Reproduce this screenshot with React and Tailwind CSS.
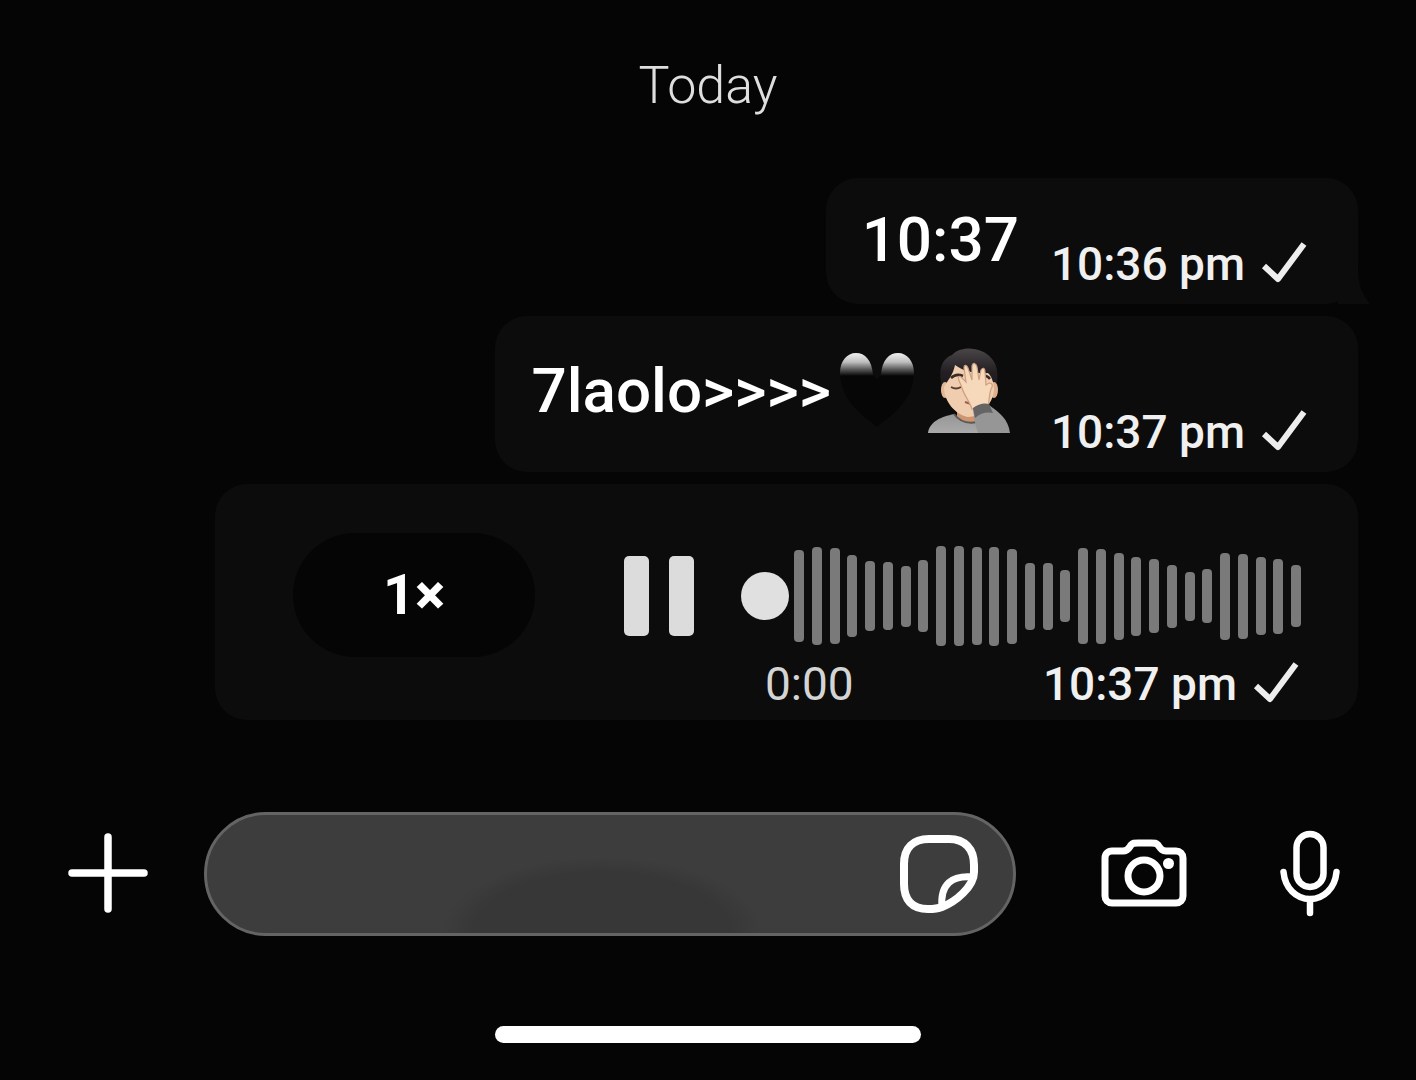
import React from "react";

const WAVE = [
  92, 98, 96, 82, 70, 68, 61, 72, 100, 100, 98, 99, 95, 67, 67, 52, 96, 95, 87,
  79, 74, 63, 49, 54, 87, 85, 78, 75, 62,
];

function Check() {
  return (
    <svg width="46" height="44" viewBox="0 0 46 44" fill="none" stroke="#eeeeee" strokeWidth="6" role="img" aria-label="Sent">
      <path d="M3 24 L17 37 L43 2" strokeLinejoin="round" />
    </svg>
  );
}

function Stamp({ time }) {
  return (
    <div className="flex items-center gap-4 whitespace-nowrap text-[46px] leading-[56px] font-medium text-[#f0f0f0]">
      <time>{time}</time>
      <Check />
    </div>
  );
}

function Heart() {
  return (
    <svg width="76" height="76" viewBox="0 0 76 76" role="img" aria-label="Black heart">
      <defs>
        <linearGradient id="heart" x1="0" y1="0" x2="0" y2="1">
          <stop offset="0" stopColor="#f0f0f0" />
          <stop offset="0.12" stopColor="#c0c0c0" />
          <stop offset="0.22" stopColor="#5a5a5a" />
          <stop offset="0.31" stopColor="#060606" />
          <stop offset="1" stopColor="#060606" />
        </linearGradient>
      </defs>
      <path d="M38 74 C22 62 1 46 1 20 C1 8 8 0 17 0 C26 0 33 7 34 22 L38 26 L42 22 C43 7 50 0 59 0 C68 0 75 8 75 20 C75 46 54 62 38 74Z" fill="url(#heart)" />
    </svg>
  );
}

function Facepalm() {
  return (
    <svg width="84" height="88" viewBox="0 0 84 88" role="img" aria-label="Person facepalming">
      <defs>
        <linearGradient id="hair" x1="0" y1="0" x2="0" y2="1">
          <stop offset="0" stopColor="#4a4648" />
          <stop offset="0.5" stopColor="#231f22" />
          <stop offset="1" stopColor="#1a1719" />
        </linearGradient>
        <linearGradient id="shirt" x1="0" y1="0" x2="0" y2="1">
          <stop offset="0" stopColor="#969696" />
          <stop offset="1" stopColor="#aaaaaa" />
        </linearGradient>
      </defs>
      <path d="M15 39 C11 24 14 12 25 8 C34 -2 56 0 65 12 C72 20 71 32 69 42 L65 48 H19Z" fill="url(#hair)" />
      <path d="M30 56 H54 V78 H30Z" fill="#cf9470" />
      <ellipse cx="18" cy="43" rx="4" ry="8" fill="#e3b795" />
      <ellipse cx="67" cy="43" rx="4" ry="8" fill="#dfb08f" />
      <path d="M17 40 C21 33 26 28 28 18 C36 24 48 27 61 26 C65 30 67 36 67 43 C66 57 53 70 41 70 C29 68 17 55 17 40Z" fill="#f0cdae" />
      <path d="M24 31 Q29 26 36 29 M56 29 Q60 28 63 32" stroke="#3a2b24" strokeWidth="2.5" fill="none" />
      <path d="M24 40 Q29 43 34 40" stroke="#5b3c30" strokeWidth="2" fill="none" />
      <path d="M38 55 L44 57" stroke="#9b5e4a" strokeWidth="2" />
      <path d="M1 86 C3 74 14 70 27 67 Q35 78 50 75 L60 86Z" fill="url(#shirt)" />
      <path d="M27 67 Q35 78 50 75" stroke="#595959" strokeWidth="2" fill="none" />
      <path d="M45 62 C42 53 36 47 34 38 C30 30 31 28 34 30 L39 35 L37 21 C37 17 40 18 41 21 L45 33 L45 19 C46 15 49 16 50 20 L52 33 L54 23 C56 20 58 21 58 25 L59 38 L62 36 C66 36 66 39 64 42 C62 48 62 56 61 61Z" fill="#f6d8ba" stroke="#cda081" strokeWidth="1.2" />
      <path d="M46 62 Q54 55 62 58 C73 66 81 72 83 86 H51 C48 78 47 70 46 62Z" fill="#969696" />
      <path d="M46 61 Q54 55 62 57 L66 66 Q56 64 48 71Z" fill="#646464" />
    </svg>
  );
}

function Bubble({ className, children }) {
  return <article className={"rounded-[32px] bg-[#0c0c0c] " + className}>{children}</article>;
}

export default function App() {
  return (
    <main className="flex min-h-screen flex-col bg-[#050505] font-['Roboto',sans-serif] text-white">
      <h1 className="mt-[54px] text-center text-[52px] leading-[64px] font-light text-[#dedede]">Today</h1>

      <section className="mt-[60px] flex flex-col items-end gap-3 pr-[58px]">
        <Bubble className="relative flex items-end gap-8 pt-[26px] pr-[51px] pb-3 pl-9">
          <p className="mb-4 text-[62px] leading-[72px] font-medium">10:37</p>
          <Stamp time="10:36 pm" />
          <svg className="absolute -right-3 bottom-0" width="32" height="34" viewBox="0 0 32 34" aria-hidden="true">
            <path d="M20 0 C20 14 24 24 32 34 H0 V20Z" fill="#0c0c0c" />
          </svg>
        </Bubble>

        <Bubble className="flex items-end gap-10 pt-[39px] pr-[51px] pb-3 pl-9">
          <div className="mb-[33px] flex h-[72px] items-center gap-2">
            <p className="text-[62px] leading-[72px] font-medium">7laolo&gt;&gt;&gt;&gt;</p>
            <div className="flex items-center gap-3">
              <Heart />
              <Facepalm />
            </div>
          </div>
          <Stamp time="10:37 pm" />
        </Bubble>

        <Bubble className="ml-[215px] flex items-start self-stretch pr-[57px] pb-2 pl-[78px]">
          <button className="mt-[49px] h-[124px] w-[242px] rounded-full bg-[#050505] text-[56px] leading-[64px] font-bold">
            1<span className="font-black">×</span>
          </button>
          <button aria-label="Pause" className="mt-[72px] ml-[89px] flex gap-5">
            <span className="h-20 w-[25px] rounded-[5px] bg-[#dcdcdc]" />
            <span className="h-20 w-[25px] rounded-[5px] bg-[#dcdcdc]" />
          </button>
          <div className="mt-[62px] ml-[47px] flex-1">
            <div className="flex h-[100px] items-center gap-[5px]">
              <span className="size-12 rounded-full bg-[#e0e0e0]" />
              <div className="flex flex-1 items-center justify-between">
                {WAVE.map((h, i) => (
                  <span key={i} className="w-[10px] rounded-[4px] bg-[#7a7a7a]" style={{ height: h }} />
                ))}
              </div>
            </div>
            <div className="mt-[10px] flex items-center justify-between pr-0.5 pl-6">
              <span className="text-[46px] leading-[56px] text-[#d4d4d4]">0:00</span>
              <Stamp time="10:37 pm" />
            </div>
          </div>
        </Bubble>
      </section>

      <form className="mt-[92px] flex items-center pr-[76px] pl-[67px]" onSubmit={(e) => e.preventDefault()}>
        <button type="button" aria-label="Attach">
          <svg width="82" height="82" viewBox="0 0 82 82" stroke="white" strokeWidth="7.5" strokeLinecap="round">
            <path d="M41 4 V76 M5 40 H77" />
          </svg>
        </button>
        <div className="ml-[55px] flex h-[124px] flex-1 items-center rounded-full border-[3px] border-[#646464] bg-[#3d3d3d] bg-[radial-gradient(ellipse_160px_76px_at_49%_100%,#373737_80%,transparent)] pr-[34px] pl-12">
          <input aria-label="Message" className="min-w-0 flex-1 bg-transparent text-[48px] outline-none" />
          <button type="button" aria-label="Stickers">
            <svg width="80" height="80" viewBox="0 0 80 80" fill="none" stroke="white" strokeWidth="8" strokeLinejoin="round">
              <path d="M30 5 H50 C66 5 75 15 75 31 V38 C75 53 56 68 43 73 C38 75 34 75 29 75 C13 75 5 66 5 50 V30 C5 14 14 5 30 5Z" />
              <path d="M74 43 C53 41 41 50 43 73" strokeWidth="7" />
            </svg>
          </button>
        </div>
        <button type="button" aria-label="Camera" className="ml-[85px]">
          <svg width="86" height="70" viewBox="0 0 86 70" fill="none" stroke="white" strokeWidth="7" strokeLinejoin="round">
            <path d="M11 12 H22 C27 12 28 9 30 6 C32 4 33 4 37 4 H50 C54 4 55 4 57 6 C60 10 61 12 65 12 H75 C79 12 82 15 82 19 V57 C82 61 79 64 75 64 H11 C7 64 4 61 4 57 V19 C4 15 7 12 11 12Z" />
            <circle cx="43" cy="37" r="16" />
            <circle cx="67.5" cy="24.5" r="5.5" fill="white" stroke="none" />
          </svg>
        </button>
        <button type="button" aria-label="Record voice message" className="ml-[93px]">
          <svg width="60" height="88" viewBox="0 0 60 88" fill="none" stroke="white" strokeWidth="6.5" strokeLinecap="round">
            <rect x="16.5" y="4" width="27" height="53" rx="13.5" />
            <path d="M3.5 42 C5 58 16 69 30 69 C44 69 55 58 56.5 42 M30 70 V83" />
          </svg>
        </button>
      </form>

      <div className="mx-auto mt-[90px] h-[17px] w-[426px] max-w-full rounded-full bg-white" />
    </main>
  );
}
